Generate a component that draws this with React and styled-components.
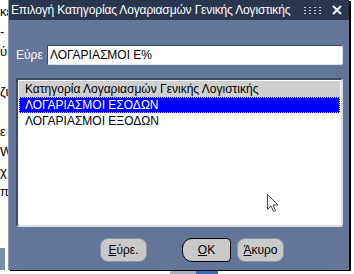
import React from "react";
import styled, { createGlobalStyle } from "styled-components";

const Global = createGlobalStyle`
  html, body { margin: 0; padding: 0; background: #fff; }
  body { width: 354px; height: 274px; overflow: hidden; font-family: "Liberation Sans", Arial, sans-serif; }
`;

const Page = styled.div`
  position: relative;
  width: 354px;
  height: 274px;
  background: #fff;
  overflow: hidden;
`;

const PageText = styled.div`
  display: flex;
  flex-direction: column;
  padding-top: 2px;
  font-size: 13px;
  color: #000;
  line-height: 20px;
`;

const PageBlock = styled.div`
  position: absolute;
  left: ${(p) => p.$x}px;
  top: ${(p) => p.$y}px;
  width: ${(p) => p.$w}px;
  height: ${(p) => p.$h}px;
  background: ${(p) => p.$c};
`;

const Window = styled.div`
  position: absolute;
  left: 8px;
  top: 0;
  width: 340px;
  height: 270px;
  display: flex;
  flex-direction: column;
  background: #63769a;
  border-left: 1px solid #8a9ab8;
  box-shadow: 2px 1px 0 #000;
`;

const TitleBar = styled.div`
  height: 20px;
  display: flex;
  align-items: center;
  background: #2b3750;
  color: #fff;
  padding: 0 7px 0 2px;
  font-size: 12px;
`;

const Title = styled.span`
  flex: 1;
  min-width: 0;
  white-space: nowrap;
  overflow: hidden;
  letter-spacing: -0.15px;
`;

const Grip = styled.div`
  display: grid;
  grid-template-columns: repeat(4, 2px);
  grid-template-rows: repeat(3, 1px);
  gap: 2px 3px;
  margin: 0 11px 0 4px;
  & > i { background: #c8d0e0; }
`;

const Body = styled.div`
  flex: 1;
  display: flex;
  flex-direction: column;
  padding: 25px 6px 0 7px;
`;

const FindRow = styled.div`
  display: flex;
  align-items: center;
  gap: 1px;
  height: 20px;
`;

const Label = styled.span`
  color: #fff;
  font-size: 12px;
  width: 30px;
`;

const Input = styled.div`
  flex: 1;
  height: 20px;
  box-sizing: border-box;
  background: #fff;
  border: 1px solid;
  border-color: #3c4a64 #d8dde8 #d8dde8 #3c4a64;
  border-radius: 0 2px 2px 2px;
  font-size: 12px;
  padding: 2px 2px;
  color: #000;
`;

const List = styled.div`
  margin-top: 13px;
  height: 149px;
  box-sizing: border-box;
  background: #fff;
  border: 2px solid;
  border-color: #3c4a64 #d8dde8 #d8dde8 #3c4a64;
  border-radius: 0 2px 3px 4px;
  padding: 1px;
  display: flex;
  flex-direction: column;
`;

const HeaderRow = styled.div`
  height: 16px;
  background: #cfcfcf;
  font-size: 12px;
  padding-left: 6px;
  line-height: 16px;
  color: #000;
`;

const Row = styled.div`
  height: 16px;
  box-sizing: border-box;
  font-size: 12px;
  line-height: 14px;
  padding-left: 5px;
  color: ${(p) => (p.$sel ? "#fff" : "#000")};
  background: ${(p) => (p.$sel ? "#0000ff" : "transparent")};
  border: 1px dotted ${(p) => (p.$sel ? "#d8d8ff" : "transparent")};
`;

const Buttons = styled.div`
  display: flex;
  margin-top: 11px;
  padding-left: 84px;
`;

const Button = styled.div`
  height: 24px;
  box-sizing: border-box;
  width: ${(p) => p.$w}px;
  margin-left: ${(p) => p.$ml}px;
  display: flex;
  align-items: center;
  justify-content: center;
  background: #c9c9c9;
  color: #000;
  font-size: 12px;
  border: 1px solid ${(p) => (p.$def ? "#000" : "#8a96aa")};
  border-radius: ${(p) => (p.$def ? "10px 4px 4px 10px" : "8px")};
  & u { text-decoration: underline; }
`;

const Cursor = styled.svg`
  position: absolute;
  left: 267px;
  top: 194px;
`;

export default function App() {
  return (
    <Page>
      <Global />
      <PageText>
        <span>κε</span>
        <span>-</span>
        <span>ύ</span>
        <span>&nbsp;</span>
        <span>ζι</span>
        <span>&nbsp;</span>
        <span>ε</span>
        <span>W</span>
        <span>χ</span>
        <span>π</span>
      </PageText>
      <PageBlock $x={0} $y={248} $w={5} $h={22} $c="#7c8cab" />
      <PageBlock $x={170} $y={270} $w={26} $h={4} $c="#a7b0c4" />
      <PageBlock $x={196} $y={270} $w={22} $h={4} $c="#2f6fb3" />
      <Window>
        <TitleBar>
          <Title>Επιλογή Κατηγορίας Λογαριασμών Γενικής Λογιστικής</Title>
          <Grip>
            <i /><i /><i /><i /><i /><i /><i /><i /><i /><i /><i /><i />
          </Grip>
          <svg width="10" height="10" viewBox="0 0 10 10">
            <path d="M1 1L9 9M9 1L1 9" stroke="#fff" strokeWidth="2" />
          </svg>
        </TitleBar>
        <Body>
          <FindRow>
            <Label>Εύρε</Label>
            <Input>ΛΟΓΑΡΙΑΣΜΟΙ Ε%</Input>
          </FindRow>
          <List>
            <HeaderRow>Κατηγορία Λογαριασμών Γενικής Λογιστικής</HeaderRow>
            <Row $sel>ΛΟΓΑΡΙΑΣΜΟΙ ΕΣΟΔΩΝ</Row>
            <Row>ΛΟΓΑΡΙΑΣΜΟΙ ΕΞΟΔΩΝ</Row>
          </List>
          <Buttons>
            <Button $w={47} $ml={0}><span><u>Ε</u>ύρε.</span></Button>
            <Button $w={49} $ml={35} $def><span><u>O</u>K</span></Button>
            <Button $w={47} $ml={6}><span><u>Ά</u>κυρο</span></Button>
          </Buttons>
        </Body>
      </Window>
      <Cursor width="12" height="19" viewBox="0 0 12 19">
        <path
          d="M0.5 0.5L0.5 15.5L4 12L6.5 17.5L8.5 16.5L6 11L11 11Z"
          fill="#fff"
          stroke="#444"
          strokeWidth="1"
        />
      </Cursor>
    </Page>
  );
}
